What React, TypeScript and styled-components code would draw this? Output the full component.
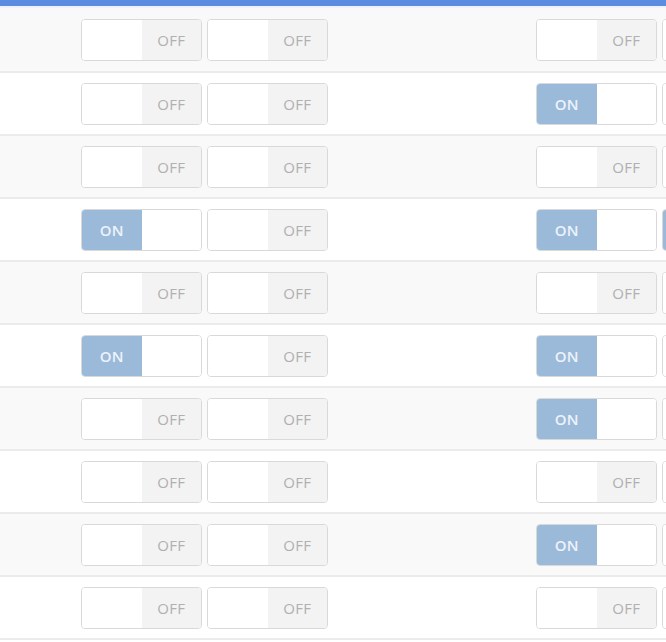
import React from 'react';
import styled, { createGlobalStyle } from 'styled-components';

const GlobalStyle = createGlobalStyle`
  html, body {
    margin: 0;
    padding: 0;
    background: #ffffff;
    font-family: 'Open Sans', 'Liberation Sans', sans-serif;
    overflow: hidden;
  }
`;

const Page = styled.div`
  width: 666px;
  height: 642px;
  overflow: hidden;
  background: #ffffff;
`;

const TopBar = styled.div`
  height: 6px;
  background: #5a8ddf;
  border-bottom: 2px solid #eef3fb;
`;

const Table = styled.div`
  display: flex;
  flex-direction: column;
  border-bottom: 2px solid #ebebeb;
`;

const Row = styled.div<{ $striped: boolean }>`
  display: flex;
  align-items: center;
  height: 61px;
  border-top: 2px solid #ebebeb;
  background: ${({ $striped }) => ($striped ? '#f9f9f9' : '#ffffff')};
  padding-left: 81px;
  gap: 208px;
  &:first-child {
    border-top: none;
    height: 63px;
  }
`;

const Group = styled.div`
  display: flex;
  gap: 5px;
  flex-shrink: 0;
`;

const Switch = styled.div`
  display: flex;
  width: 121px;
  height: 42px;
  box-sizing: border-box;
  border: 1px solid #d9d9d9;
  border-radius: 4px;
  overflow: hidden;
  flex-shrink: 0;
  background: #ffffff;
`;

const Half = styled.span<{ $kind: 'on' | 'off' | 'blank' }>`
  flex: 1;
  display: flex;
  align-items: center;
  justify-content: center;
  font-size: 15px;
  letter-spacing: 0.2px;
  background: ${({ $kind }) =>
    $kind === 'on' ? '#9bb9d9' : $kind === 'off' ? '#f3f3f3' : '#ffffff'};
  color: ${({ $kind }) => ($kind === 'on' ? '#eef3f9' : '#b0b0b0')};
  font-weight: ${({ $kind }) => ($kind === 'on' ? 600 : 400)};
`;

const Toggle = ({ on }: { on: boolean }) => (
  <Switch>
    {on ? (
      <>
        <Half $kind="on">ON</Half>
        <Half $kind="blank" />
      </>
    ) : (
      <>
        <Half $kind="blank" />
        <Half $kind="off">OFF</Half>
      </>
    )}
  </Switch>
);

const rows: boolean[][] = [
  [false, false, false, false],
  [false, false, true, false],
  [false, false, false, false],
  [true, false, true, true],
  [false, false, false, false],
  [true, false, true, false],
  [false, false, true, false],
  [false, false, false, false],
  [false, false, true, false],
  [false, false, false, false],
];

export default function App() {
  return (
    <Page>
      <GlobalStyle />
      <TopBar />
      <Table>
        {rows.map((r, i) => (
          <Row key={i} $striped={i % 2 === 0}>
            <Group>
              <Toggle on={r[0]} />
              <Toggle on={r[1]} />
            </Group>
            <Group>
              <Toggle on={r[2]} />
              <Toggle on={r[3]} />
            </Group>
          </Row>
        ))}
      </Table>
    </Page>
  );
}
